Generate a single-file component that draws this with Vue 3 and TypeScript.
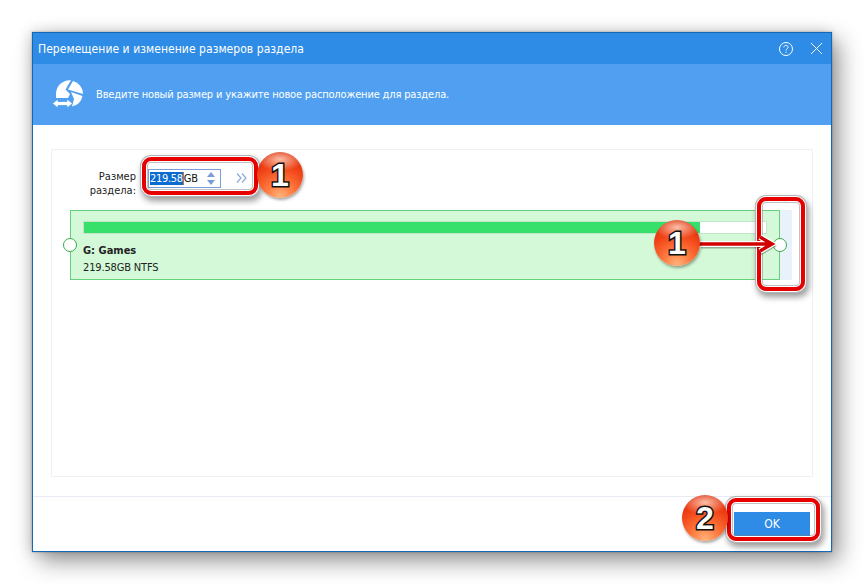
<template>
  <div class="page">
    <div class="window">
      <!-- заголовок окна -->
      <div class="titlebar">
        <span class="title">Перемещение и изменение размеров раздела</span>
        <svg class="help" width="16" height="16" viewBox="0 0 16 16" fill="none" stroke="#fff">
          <circle cx="8" cy="8" r="6.500" />
          <path d="M5.900 6.400c0-1.300 1-2.100 2.100-2.100s2.100.8 2.100 1.900c0 1.600-2.100 1.600-2.100 3.300" />
          <path d="M8 10.600v1.200" />
        </svg>
        <svg class="close" width="13" height="13" viewBox="0 0 13 13" stroke="#fff" fill="none">
          <path d="M1 1l11 11M12 1L1 12" />
        </svg>
      </div>

      <div class="banner">
        <svg class="banner-icon" width="34" height="34" viewBox="51 77 34 34" fill="#fff">
          <path d="M71 79.300A13.500 13.500 0 0 0 56 93v4h12l2-4-4.500-4.500z" />
          <path d="M73 80A13.500 13.500 0 0 1 83 93L68 88.500z" />
          <path d="M71 91l11.500 4A13.500 13.500 0 0 1 72 105.500l2-7.500z" />
          <path d="M52.500 102.500L58 98v2.500h9V98l5.500 4.500L67 107v-2.500h-9v2.500z" stroke="#519ff0" stroke-width=".8" />
        </svg>
        <span class="banner-text">Введите новый размер и укажите новое расположение для раздела.</span>
      </div>

      <div class="content">
        <div class="panel">
          <div class="size-row">
            <label class="size-label">Размер<br />раздела:</label>
            <div class="size-input">
              <span class="size-value"><span class="selected">219.58</span>GB</span>
              <span class="spin">
                <i class="spin-up"></i>
                <i class="spin-down"></i>
              </span>
            </div>
            <svg class="chevrons" width="11" height="10" viewBox="0 0 11 10" fill="none" stroke="#8aa9dc" stroke-width="1.200">
              <path d="M1 .5l4 4.500-4 4.500M6 .5l4 4.500-4 4.500" />
            </svg>
          </div>

          <div class="track">
            <div class="partition">
              <div class="usage">
                <div class="usage-fill" :style="{ width: usedPercent + '%' }"></div>
              </div>
              <div class="part-name">G: Games</div>
              <div class="part-info">219.58GB NTFS</div>
            </div>
            <span class="handle handle-left"></span>
            <span class="handle handle-right"></span>
          </div>
        </div>
      </div>

      <div class="footer">
        <button class="ok-btn">OK</button>
      </div>
    </div>

    <!-- пометки поверх скриншота -->
    <div class="frame frame-size"></div>
    <div class="frame frame-handle"></div>
    <div class="frame frame-ok"></div>

    <svg class="arrow" width="92" height="26" viewBox="0 0 92 26" fill="none">
      <path d="M3 15h68M62 8l12 7-12 7" stroke="#000" stroke-opacity=".3" stroke-width="5" />
      <path d="M1 13h70M62 6l12 7-12 7" stroke="#fff" stroke-width="6" />
      <path d="M1 13h70M62 6l12 7-12 7" stroke="#d00000" stroke-width="3.500" />
    </svg>

    <span class="marker marker-size">1</span>
    <span class="marker marker-arrow">1</span>
    <span class="marker marker-ok">2</span>
  </div>
</template>

<script setup lang="ts">
const usedPercent = 90.3
</script>

<style>
html,
body {
  margin: 0;
  background: #fff;
}
</style>

<style scoped>
.page {
  position: relative;
  width: 864px;
  height: 584px;
  overflow: hidden;
  padding: 32px;
  box-sizing: border-box;
  font-family: "DejaVu Sans Condensed", "DejaVu Sans", sans-serif;
  font-size: 11px;
}

.window {
  display: flex;
  flex-direction: column;
  width: 800px;
  height: 520px;
  box-sizing: border-box;
  border: 1px solid #1568b4;
  background: #fff;
  box-shadow: 0 0 2px rgba(0, 0, 0, 0.3), 7px 9px 22px rgba(0, 0, 0, 0.42), -2px 0 12px rgba(0, 0, 0, 0.14);
}

.titlebar {
  display: flex;
  align-items: center;
  height: 31px;
  padding: 0 8px 0 5px;
  background: #2e8ce6;
  color: #fff;
}

.title {
  flex: 1;
  font-size: 12px;
  letter-spacing: 0.05px;
}

.help {
  margin-right: 16px;
}

.banner {
  display: flex;
  align-items: center;
  height: 61px;
  padding-left: 18px;
  background: #519ff0;
  color: #fff;
}

.banner-icon {
  margin-right: 11px;
}

.banner-text {
  letter-spacing: -0.16px;
}

.content {
  flex: 1;
  padding: 24px 18px 19px 18px;
  border-bottom: 1px solid #e8ebf5;
}

.panel {
  height: 100%;
  box-sizing: border-box;
  border: 1px solid #eef0f6;
  padding: 8px 18px 0 18px;
}

.size-row {
  display: flex;
  align-items: center;
  height: 40px;
  padding-left: 2px;
}

.size-label {
  width: 64px;
  margin-top: 12px;
  text-align: right;
  line-height: 14px;
  color: #222;
}

.size-input {
  display: flex;
  align-items: center;
  justify-content: space-between;
  width: 73px;
  height: 19px;
  box-sizing: border-box;
  margin-left: 12px;
  padding: 0 5px 0 1px;
  border: 1px solid #7b9ed8;
  color: #111;
  letter-spacing: -0.3px;
}

.selected {
  border-right: 1px solid #d07020;
  background: #0a6cd0;
  color: #fff;
}

.spin {
  display: flex;
  flex-direction: column;
  gap: 3px;
}

.spin i {
  display: block;
  width: 0;
  height: 0;
  border-left: 4px solid transparent;
  border-right: 4px solid transparent;
}

.spin-up {
  border-bottom: 5px solid #7a9cd8;
}

.spin-down {
  border-top: 5px solid #7a9cd8;
}

.chevrons {
  margin-left: 15px;
}

.track {
  position: relative;
  width: 722px;
  height: 70px;
  margin-top: 12px;
  background: linear-gradient(to right, transparent 710px, #e9f1fb 710px);
}

.partition {
  width: 710px;
  height: 70px;
  box-sizing: border-box;
  padding: 10px 12px 0 12px;
  border: 1px solid #66d07a;
  background: #d4f9d8;
}

.usage {
  height: 13px;
  box-sizing: border-box;
  border: 1px solid #c5e5cb;
  background: #fff;
}

.usage-fill {
  height: 100%;
  background: #36e06a;
}

.part-name {
  margin-top: 10px;
  font-weight: 700;
  color: #222;
}

.part-info {
  margin-top: 4px;
  color: #222;
  letter-spacing: -0.15px;
}

.handle {
  position: absolute;
  top: 28px;
  width: 14px;
  height: 14px;
  box-sizing: border-box;
  border: 1px solid #3ca94f;
  border-radius: 50%;
  background: #fff;
}

.handle-left {
  left: -7px;
}

.handle-right {
  left: 703px;
}

.footer {
  display: flex;
  justify-content: flex-end;
  align-items: center;
  height: 54px;
  padding-right: 21px;
}

.ok-btn {
  width: 76px;
  height: 24px;
  border: 0;
  background: #2e8ce6;
  color: #fff;
  font: inherit;
  font-size: 12px;
}

.frame {
  position: absolute;
  box-sizing: border-box;
  border: 4px solid #e60000;
  border-radius: 9px;
  box-shadow: 0 0 0 1px #fff, 0 0 0 2px #b5b5b5, 2px 4px 6px 2px rgba(0, 0, 0, 0.4), inset 0 0 0 1px #fff, inset 0 0 0 2px rgba(120, 120, 120, 0.45);
}

.frame-size {
  left: 142px;
  top: 157px;
  width: 116px;
  height: 38px;
}

.frame-handle {
  left: 757px;
  top: 197px;
  width: 48px;
  height: 94px;
}

.frame-ok {
  left: 727px;
  top: 498px;
  width: 93px;
  height: 43px;
}

.marker {
  position: absolute;
  display: flex;
  align-items: center;
  justify-content: center;
  width: 46px;
  height: 46px;
  border-radius: 50%;
  background:
    radial-gradient(ellipse 58% 28% at 50% 16%, rgba(255, 225, 205, 0.8), rgba(255, 200, 170, 0) 90%),
    radial-gradient(circle at 50% 96%, #ffb27a 0%, #ff7a3e 28%, #f2481a 58%, #e22c08 82%, #c42006 100%);
  box-shadow: 1px 2px 3px rgba(0, 0, 0, 0.35);
  color: #fff;
  font-family: "Liberation Sans", sans-serif;
  font-size: 32px;
  font-weight: 700;
  -webkit-text-stroke: 3px #111;
  paint-order: stroke fill;
}

.marker-size {
  left: 257px;
  top: 152px;
}

.marker-arrow {
  left: 654px;
  top: 220px;
}

.marker-ok {
  left: 682px;
  top: 495px;
}

.arrow {
  position: absolute;
  left: 698px;
  top: 231px;
}
</style>
